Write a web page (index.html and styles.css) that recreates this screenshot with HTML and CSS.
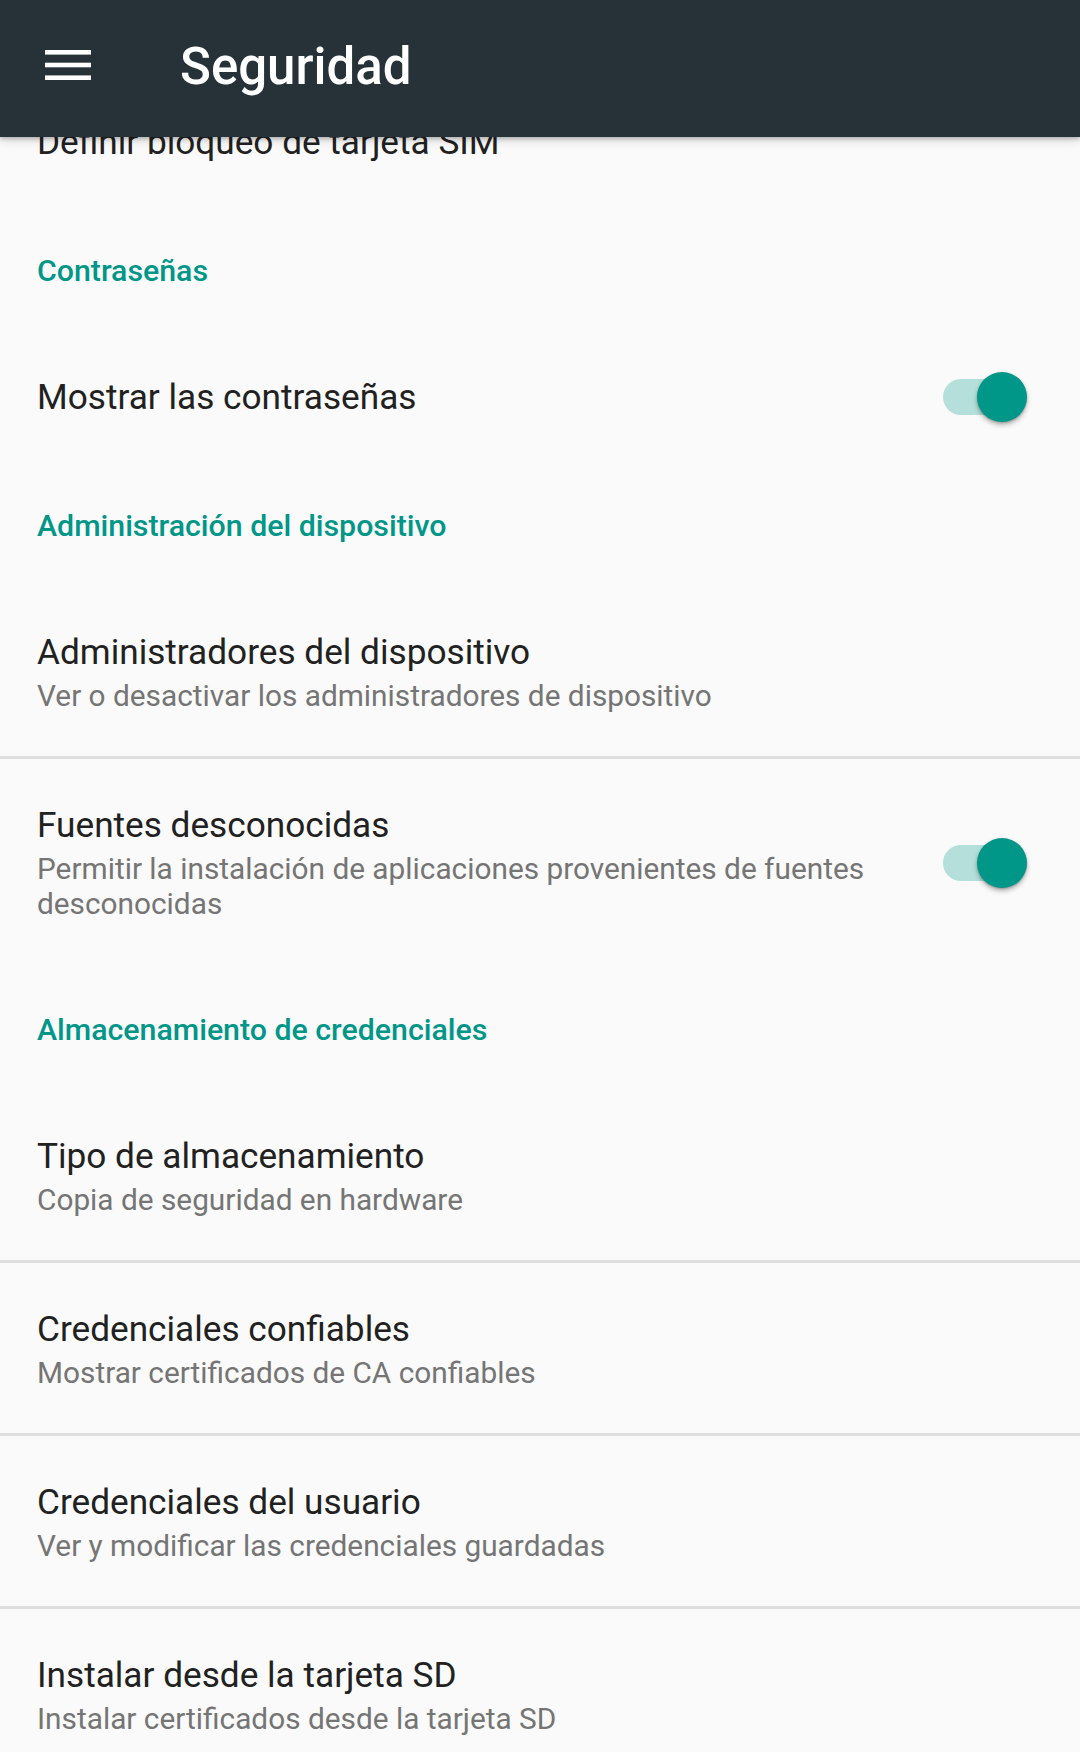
FILE: index.html
```html
<!DOCTYPE html>
<html lang="es">
<head>
<meta charset="utf-8">
<title>Seguridad</title>
<link rel="stylesheet" href="styles.css">
</head>
<body>
<div class="screen">
  <header class="toolbar">
    <svg class="menu" width="46" height="31" viewBox="0 0 46 31" aria-hidden="true">
      <rect x="0" y="0" width="46" height="4.6" fill="#ffffff"/>
      <rect x="0" y="12.7" width="46" height="4.6" fill="#ffffff"/>
      <rect x="0" y="25.4" width="46" height="4.6" fill="#ffffff"/>
    </svg>
    <h1 class="title">Seguridad</h1>
  </header>
  <main class="scroll">
    <div class="list">
      <div class="item">
        <div class="item-text"><div class="item-title">Definir bloqueo de tarjeta SIM</div></div>
      </div>

      <div class="category">Contraseñas</div>
      <div class="item">
        <div class="item-text"><div class="item-title">Mostrar las contraseñas</div></div>
        <div class="switch"><span class="track"></span><span class="thumb"></span></div>
      </div>

      <div class="category">Administración del dispositivo</div>
      <div class="item divided">
        <div class="item-text">
          <div class="item-title">Administradores del dispositivo</div>
          <div class="item-sub">Ver o desactivar los administradores de dispositivo</div>
        </div>
      </div>
      <div class="item">
        <div class="item-text">
          <div class="item-title">Fuentes desconocidas</div>
          <div class="item-sub">Permitir la instalación de aplicaciones provenientes de fuentes desconocidas</div>
        </div>
        <div class="switch"><span class="track"></span><span class="thumb"></span></div>
      </div>

      <div class="category">Almacenamiento de credenciales</div>
      <div class="item divided">
        <div class="item-text">
          <div class="item-title">Tipo de almacenamiento</div>
          <div class="item-sub">Copia de seguridad en hardware</div>
        </div>
      </div>
      <div class="item divided">
        <div class="item-text">
          <div class="item-title">Credenciales confiables</div>
          <div class="item-sub">Mostrar certificados de CA confiables</div>
        </div>
      </div>
      <div class="item divided">
        <div class="item-text">
          <div class="item-title">Credenciales del usuario</div>
          <div class="item-sub">Ver y modificar las credenciales guardadas</div>
        </div>
      </div>
      <div class="item">
        <div class="item-text">
          <div class="item-title">Instalar desde la tarjeta SD</div>
          <div class="item-sub">Instalar certificados desde la tarjeta SD</div>
        </div>
      </div>
    </div>
  </main>
</div>
</body>
</html>
```

FILE: styles.css
```css
* {
  box-sizing: border-box;
}

html, body {
  margin: 0;
  padding: 0;
  background: #fafafa;
}

body {
  font-family: Roboto, "Noto Sans", "Liberation Sans", sans-serif;
}

.screen {
  width: 1080px;
  height: 1752px;
  display: flex;
  flex-direction: column;
  overflow: hidden;
  background: #fafafa;
}

.toolbar {
  flex: none;
  height: 137px;
  display: flex;
  align-items: flex-start;
  background: #263238;
  position: relative;
  z-index: 2;
  box-shadow: 0 2px 4px rgba(0, 0, 0, 0.22), 0 4px 10px rgba(0, 0, 0, 0.12);
}

.menu {
  flex: none;
  margin-left: 45px;
  margin-top: 50px;
  display: block;
}

.title {
  margin: 0 0 0 89px;
  font-family: Roboto, sans-serif;
  font-weight: 500;
  font-size: 51px;
  line-height: 134px;
  color: #ffffff;
  letter-spacing: 0;
}

.scroll {
  flex: 1;
  overflow: hidden;
  position: relative;
  z-index: 1;
}

.list {
  margin-top: -61px;
}

.item {
  display: flex;
  align-items: center;
  padding: 47px 53px 44px 37px;
}

.item.divided {
  border-bottom: 3px solid #dedede;
}

.item-text {
  flex: 1;
  min-width: 0;
}

.item-title {
  font-size: 35.2px;
  line-height: 38px;
  color: #212121;
}

.item-sub {
  margin-top: 7px;
  margin-bottom: -1px;
  font-size: 29.8px;
  line-height: 35px;
  color: #757575;
}

.category {
  padding: 46px 37px 40px;
  font-weight: 500;
  font-size: 30.3px;
  line-height: 40px;
  color: #009688;
}

.switch {
  flex: none;
  position: relative;
  width: 84px;
  height: 50px;
  margin: -6px 0 -6px 24px;
}

.track {
  position: absolute;
  left: 0;
  top: 7px;
  width: 84px;
  height: 36px;
  border-radius: 18px;
  background: #b4dfdb;
}

.thumb {
  position: absolute;
  right: 0;
  top: 0;
  width: 50px;
  height: 50px;
  border-radius: 50%;
  background: #009688;
  box-shadow: 0 3px 5px rgba(0, 0, 0, 0.28), 0 1px 2px rgba(0, 0, 0, 0.2);
}
```
